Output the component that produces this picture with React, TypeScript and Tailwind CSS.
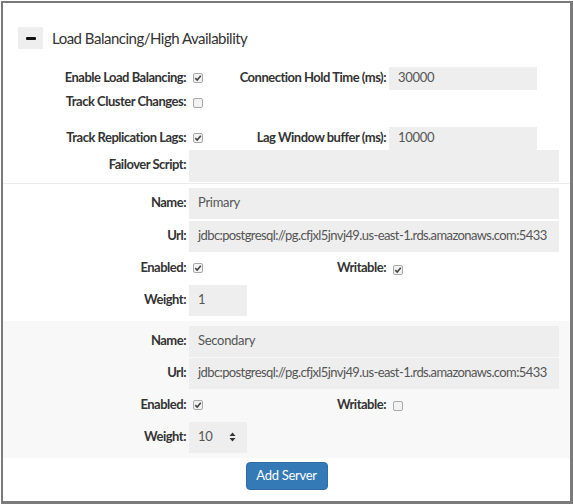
import type { ReactNode } from "react";

const font = { fontFamily: "Lato, 'Open Sans', sans-serif" };

function Check({ checked }: { checked?: boolean }) {
  return (
    <span className="inline-flex h-[10px] w-[10px] items-center justify-center rounded-[2px] border border-[#a9a9a9] bg-[#f2f2f2]">
      {checked && (
        <svg width="8" height="8" viewBox="0 0 8 8">
          <path d="M1.3 4.2 L3.2 6 L6.8 1.8" fill="none" stroke="#444" strokeWidth="1.6" />
        </svg>
      )}
    </span>
  );
}

function Label({ children, className = "" }: { children: ReactNode; className?: string }) {
  return (
    <div className={`text-right text-[13px] font-bold tracking-[-0.5px] whitespace-nowrap text-[#333] ${className}`}>
      {children}
    </div>
  );
}

function Field({ value, className = "", children }: { value?: string; className?: string; children?: ReactNode }) {
  return (
    <div
      className={`flex items-center overflow-hidden whitespace-nowrap bg-[#eeeeee] pl-[9px] text-[13px] text-[#555] ${className}`}
    >
      {value}
      {children}
    </div>
  );
}

type Server = { name: string; url: string; enabled: boolean; writable: boolean; weight: string; select?: boolean };

const servers: Server[] = [
  { name: "Primary", url: "jdbc:postgresql://pg.cfjxl5jnvj49.us-east-1.rds.amazonaws.com:5433", enabled: true, writable: true, weight: "1" },
  { name: "Secondary", url: "jdbc:postgresql://pg.cfjxl5jnvj49.us-east-1.rds.amazonaws.com:5433", enabled: true, writable: false, weight: "10", select: true },
];

function ServerBlock({ server, shaded }: { server: Server; shaded?: boolean }) {
  return (
    <div className={shaded ? "bg-[#f8f8f8] pb-[5px] pt-[5px]" : "pb-[5px] pt-[4px]"}>
      <div className="flex items-center">
        <Label className="w-[183px]">Name:</Label>
        <Field value={server.name} className="ml-[3px] h-[31px] w-[370px] tracking-[-0.3px]" />
      </div>
      <div className={`flex items-center ${shaded ? "mt-px" : "mt-[2px]"}`}>
        <Label className="w-[183px]">Url:</Label>
        <Field value={server.url} className="ml-[3px] h-[31px] w-[370px] tracking-[-0.6px]" />
      </div>
      <div className="flex h-[33px] items-center">
        <Label className="w-[183px]">Enabled:</Label>
        <div className="ml-[3px] flex w-[197px] items-center justify-between pl-[4px]">
          <Check checked={server.enabled} />
          <Label>Writable:</Label>
        </div>
        <div className="ml-[7px]">
          <Check checked={server.writable} />
        </div>
      </div>
      <div className="flex items-center">
        <Label className="w-[183px]">Weight:</Label>
        <Field value={server.weight} className="ml-[3px] h-[31px] w-[58px] tracking-[-0.3px]">
          {server.select && (
            <svg className="ml-[17px]" width="7" height="10" viewBox="0 0 7 10">
              <path d="M3.5 0.5 L6.5 4 L0.5 4 Z M0.5 6 L6.5 6 L3.5 9.5 Z" fill="#333" />
            </svg>
          )}
        </Field>
      </div>
    </div>
  );
}

export default function App() {
  return (
    <div className="min-h-[504px] w-[573px] bg-white" style={font}>
      <div className="ml-px mt-px h-[503px] w-[572px] border-b-[3px] border-l-2 border-r-[3px] border-t-2 border-[#7b7b7b]">
        <div className="flex items-center pl-[15px] pt-[24px]">
          <div className="flex h-[22px] w-[25px] items-center justify-center bg-[#eeeeee]">
            <span className="h-[3px] w-[10px] rounded-[1px] bg-[#111]" />
          </div>
          <div className="ml-[9px] text-[15px] tracking-[-0.5px] text-[#333]">Load Balancing/High Availability</div>
        </div>

        <div className="mt-[17px] flex h-[23px] items-center">
          <Label className="w-[183px]">Enable Load Balancing:</Label>
          <div className="ml-[3px] flex w-[197px] items-center justify-between pl-[4px]">
            <Check checked />
            <Label>Connection Hold Time (ms):</Label>
          </div>
          <Field value="30000" className="ml-[3px] h-[23px] w-[148px] tracking-[-0.3px]" />
        </div>
        <div className="flex h-[24px] items-center">
          <Label className="w-[183px]">Track Cluster Changes:</Label>
          <div className="ml-[7px]">
            <Check />
          </div>
        </div>
        <div className="mt-[13px] flex h-[23px] items-center">
          <Label className="w-[183px]">Track Replication Lags:</Label>
          <div className="ml-[3px] flex w-[197px] items-center justify-between pl-[4px]">
            <Check checked />
            <Label>Lag Window buffer (ms):</Label>
          </div>
          <Field value="10000" className="ml-[3px] h-[23px] w-[148px] tracking-[-0.3px]" />
        </div>
        <div className="flex">
          <Label className="w-[183px] pt-[5px]">Failover Script:</Label>
          <Field className="ml-[3px] h-[32px] w-[370px]" />
        </div>
        <div className="mt-px h-px bg-[#ebebeb]" />

        {servers.map((s, i) => (
          <ServerBlock key={s.name} server={s} shaded={i === 1} />
        ))}

        <div className="mt-[4px] flex justify-center">
          <button className="h-[28px] w-[82px] rounded-[4px] border border-[#2e6da4] bg-[#337ab7] text-[13px] tracking-[-0.3px] text-white">
            Add Server
          </button>
        </div>
      </div>
    </div>
  );
}
